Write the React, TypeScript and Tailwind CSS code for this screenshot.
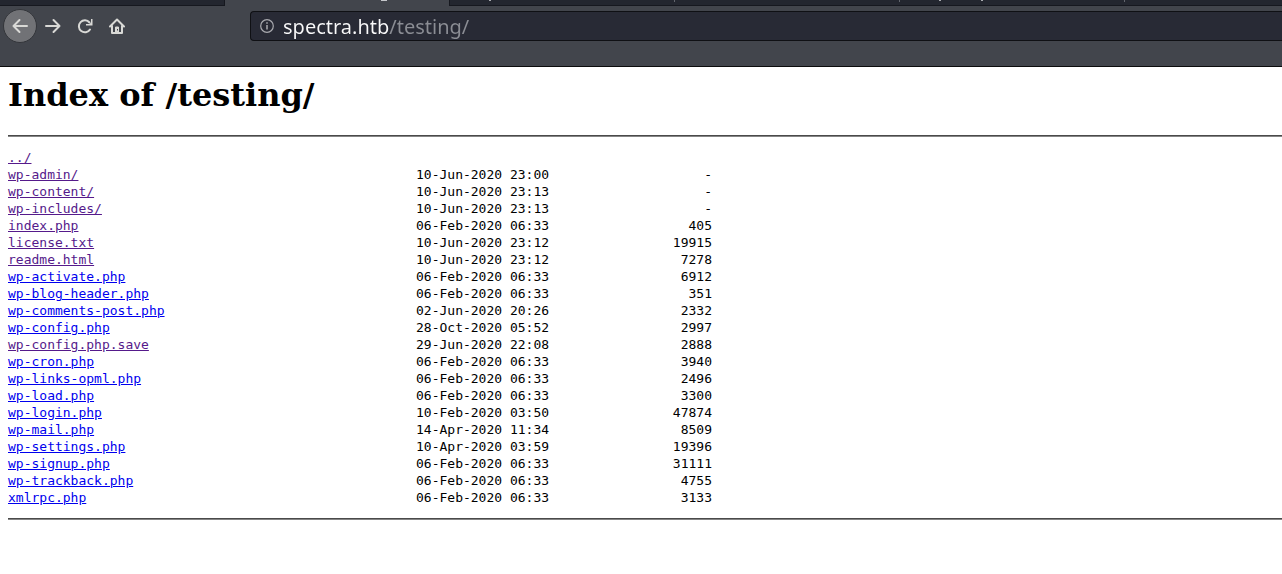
import React from "react";

type Entry = { name: string; date: string; size: string; visited?: boolean };

const entries: Entry[] = [
  { name: "../", date: "", size: "", visited: true },
  { name: "wp-admin/", date: "10-Jun-2020 23:00", size: "-", visited: true },
  { name: "wp-content/", date: "10-Jun-2020 23:13", size: "-", visited: true },
  { name: "wp-includes/", date: "10-Jun-2020 23:13", size: "-", visited: true },
  { name: "index.php", date: "06-Feb-2020 06:33", size: "405", visited: true },
  { name: "license.txt", date: "10-Jun-2020 23:12", size: "19915", visited: true },
  { name: "readme.html", date: "10-Jun-2020 23:12", size: "7278", visited: true },
  { name: "wp-activate.php", date: "06-Feb-2020 06:33", size: "6912" },
  { name: "wp-blog-header.php", date: "06-Feb-2020 06:33", size: "351" },
  { name: "wp-comments-post.php", date: "02-Jun-2020 20:26", size: "2332" },
  { name: "wp-config.php", date: "28-Oct-2020 05:52", size: "2997" },
  { name: "wp-config.php.save", date: "29-Jun-2020 22:08", size: "2888", visited: true },
  { name: "wp-cron.php", date: "06-Feb-2020 06:33", size: "3940" },
  { name: "wp-links-opml.php", date: "06-Feb-2020 06:33", size: "2496" },
  { name: "wp-load.php", date: "06-Feb-2020 06:33", size: "3300" },
  { name: "wp-login.php", date: "10-Feb-2020 03:50", size: "47874" },
  { name: "wp-mail.php", date: "14-Apr-2020 11:34", size: "8509" },
  { name: "wp-settings.php", date: "10-Apr-2020 03:59", size: "19396" },
  { name: "wp-signup.php", date: "06-Feb-2020 06:33", size: "31111" },
  { name: "wp-trackback.php", date: "06-Feb-2020 06:33", size: "4755" },
  { name: "xmlrpc.php", date: "06-Feb-2020 06:33", size: "3133" },
];

function Icon({ children }: { children: React.ReactNode }) {
  return (
    <svg
      viewBox="0 0 16 16"
      className="size-4"
      fill="none"
      stroke="currentColor"
      strokeWidth="2"
      strokeLinecap="round"
      strokeLinejoin="round"
      aria-hidden="true"
    >
      {children}
    </svg>
  );
}

function TabStrip() {
  return (
    <div className="flex h-1.5 overflow-hidden">
      <div className="w-[225px] shrink-0 border-r border-b border-[#16181f] bg-[#23262f]" />
      <div className="w-[224px] shrink-0 pl-[156px]">
        <div className="h-px w-1.5 bg-[#c5c7cb]" />
      </div>
      <div className="flex grow border-b border-l border-[#16181f] bg-[#23262f]">
        <div className="flex w-[225px] shrink-0 justify-between pl-[39px]">
          <span className="h-px w-0.5 bg-[#a9abb0]" />
          <span className="h-0.5 w-px bg-[#62656d]" />
        </div>
        <div className="flex w-[225px] shrink-0 justify-end">
          <span className="h-0.5 w-px bg-[#62656d]" />
        </div>
        <div className="flex w-[225px] shrink-0 justify-between pl-[39px]">
          <div className="flex gap-10">
            <span className="h-px w-0.5 bg-[#a9abb0]" />
            <span className="h-px w-0.5 bg-[#a9abb0]" />
          </div>
          <span className="h-0.5 w-px bg-[#62656d]" />
        </div>
      </div>
    </div>
  );
}

function Toolbar() {
  return (
    <div className="flex items-start pt-[3px] pl-[3px]">
      <div className="flex w-[247px] shrink-0 items-center text-[#d9d9d6]">
        <button aria-label="Back" className="flex size-[34px] items-center justify-center rounded-full border border-[#33353a] bg-[#717276]">
          <Icon><path d="M15 8H1.500M7.500 2L1.500 8L7.500 14" /></Icon>
        </button>
        <button aria-label="Forward" className="flex size-8 items-center justify-center">
          <Icon><path d="M1 8H14.500M8.500 2L14.500 8L8.500 14" /></Icon>
        </button>
        <button aria-label="Reload" className="flex size-8 items-center justify-center">
          <Icon>
            <path d="M13 11.500A6 6 0 1 1 12.500 4.500" />
            <path d="M15.500 1V7.500H9V6H12.500L14 4.500V1Z" fill="currentColor" stroke="none" />
          </Icon>
        </button>
        <button aria-label="Home" className="flex size-8 items-center justify-center">
          <Icon>
            <path d="M1 8.500L8 1.500L15 8.500M3 8V15H13V8" />
            <path d="M6.500 14.500V9H9.500V14.500Z" fill="currentColor" strokeWidth="1" />
            <path d="M8.500 11V12.500" stroke="#42454c" strokeWidth="1" strokeLinecap="butt" />
          </Icon>
        </button>
      </div>
      <div className="mt-0.5 flex h-[30px] grow items-center rounded-l border border-r-0 border-[#0f1014] bg-[#282a35] pl-[9px]">
        <svg viewBox="0 0 14 14" className="size-3.5 shrink-0 text-[#a9aaaf]" fill="none" stroke="currentColor" aria-hidden="true">
          <circle cx="7" cy="7" r="6.300" strokeWidth="1.200" />
          <path d="M7 6V10.500M7 3.300V4.800" strokeWidth="1.500" />
        </svg>
        <input
          aria-label="Address"
          defaultValue="spectra.htb/testing/"
          spellCheck={false}
          className="ml-[9px] h-7 min-w-0 grow bg-[linear-gradient(90deg,#f9f9fa_106px,#8b8d94_106px)] bg-clip-text pt-0.5 font-['Noto_Sans',sans-serif] text-[20px] text-transparent caret-white outline-none"
        />
      </div>
    </div>
  );
}

export default function App() {
  return (
    <div className="min-h-screen bg-white">
      <header className="h-[67px] overflow-hidden border-b border-[#0c0c0d] bg-[#42454c]">
        <TabStrip />
        <Toolbar />
      </header>
      <main className="pl-2 text-black">
        <h1 className="pt-2 font-['DejaVu_Serif',serif] text-[32px] leading-10 font-bold">Index of /testing/</h1>
        <hr className="mt-5 h-0.5 border-t border-b border-t-[#4a4a4a] border-b-[#858585]" />
        <table className="mt-3 table-fixed border-collapse font-['DejaVu_Sans_Mono',monospace] text-[13px] leading-[17px]">
          <colgroup>
            <col className="w-[408px]" />
            <col className="w-[136px]" />
            <col className="w-[160px]" />
          </colgroup>
          <tbody>
            {entries.map((e) => (
              <tr key={e.name} className="h-[17px]">
                <td className="p-0">
                  <a href={e.name} className={e.visited ? "text-[#551a8b] underline" : "text-[#0000ee] underline"}>{e.name}</a>
                </td>
                <td className="p-0 whitespace-nowrap">{e.date}</td>
                <td className="p-0 text-right">{e.size}</td>
              </tr>
            ))}
          </tbody>
        </table>
        <hr className="mt-3 h-0.5 border-t border-b border-t-[#4a4a4a] border-b-[#858585]" />
      </main>
    </div>
  );
}
